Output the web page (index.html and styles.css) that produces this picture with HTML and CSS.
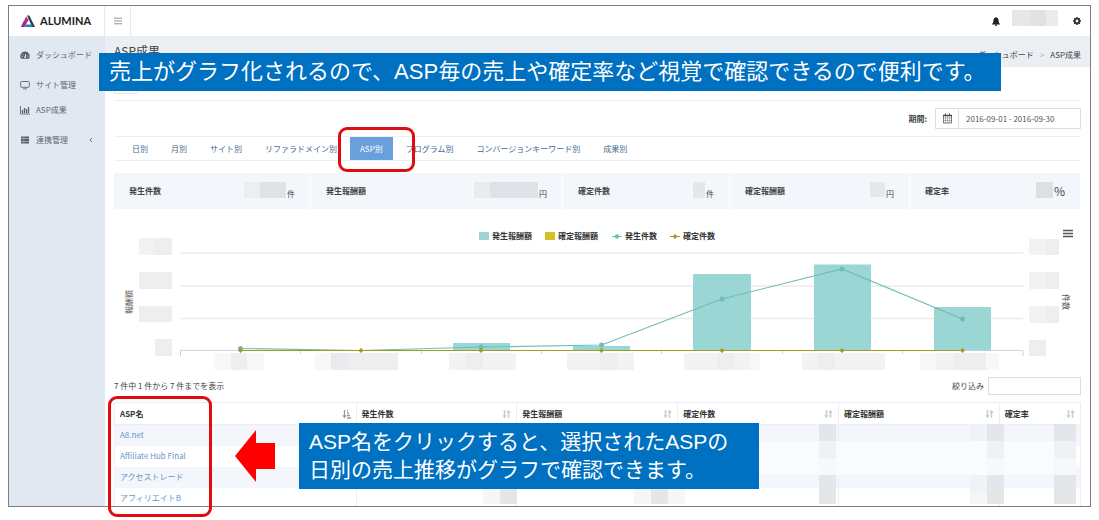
FILE: index.html
```html
<!DOCTYPE html>
<html lang="ja">
<head>
<meta charset="utf-8">
<title>ALUMINA - ASP成果</title>
<link rel="stylesheet" href="styles.css">
</head>
<body>
<svg class="defs" aria-hidden="true">
  <symbol id="sort" viewBox="0 0 9 10">
    <path d="M2.500 1v6M6.500 9V3" stroke="currentColor" stroke-width="1.500"/>
    <path d="M0.300 6.300h4.400L2.500 9.300zM4.300 3.700h4.400L6.500 .7z" fill="currentColor"/>
  </symbol>
</svg>
<div class="window">
  <header class="topbar">
    <a class="brand" href="#">
      <svg width="14" height="13" viewBox="0 0 14 13" aria-hidden="true">
        <path d="M5.200 1.500 7.600 5 3.500 12H0z" fill="#c2268b"/>
        <path d="M2.800 6 5 8.600 3.500 12H0z" fill="#7b3c98"/>
        <path d="M6 .5h2.300L14 12h-2.800z" fill="#2d3e50"/>
        <path d="M5.400 9.600h5.200l1 2.400H3.800z" fill="#2b7fa8"/>
      </svg>
      <span>ALUMINA</span>
    </a>
    <button class="toggle" type="button" aria-label="メニュー">
      <svg width="8" height="8" viewBox="0 0 8 8"><path d="M0 1.200h8M0 4h8M0 6.800h8" stroke="#8b98a6"/></svg>
    </button>
    <div class="tools">
      <button type="button" aria-label="通知">
        <svg width="8" height="9" viewBox="0 0 8 9"><path d="M4 0c.5 0 .7.3.7.7C6 1 6.600 2 6.600 3.300c0 2 .4 2.800 1.400 3.700v.5H0V7c1-.9 1.400-1.700 1.400-3.700C1.400 2 2 1 3.300.7 3.300.3 3.500 0 4 0zM2.900 7.800h2.200C5 8.600 4.600 9 4 9s-1-.4-1.100-1.200z" fill="#222"/></svg>
      </button>
      <svg class="user" width="46" height="16" aria-hidden="true"><path d="M0 0h18v16H0z" fill="#e7e7e7"/><path d="M18 0h16v16H18z" fill="#e1e1e1"/><path d="M34 0h12v16H34z" fill="#ebebeb"/></svg>
      <button type="button" aria-label="設定">
        <svg width="8" height="8" viewBox="0 0 8 8"><circle cx="4" cy="4" r="2.200" fill="none" stroke="#222" stroke-width="1.600"/><path d="M4 0v1.500M4 6.500V8M0 4h1.500M6.500 4H8M1.200 1.200l1 1M5.800 5.800l1 1M6.800 1.200l-1 1M2.200 5.800l-1 1" stroke="#222" stroke-width="1.500"/></svg>
      </button>
    </div>
  </header>

  <div class="body">
    <nav class="sidebar">
      <ul>
        <li><a href="#">
          <svg width="10" height="10" viewBox="0 0 10 10"><path d="M5 1.500a4.700 4.700 0 0 0-4 7.200h8A4.700 4.700 0 0 0 5 1.500z" fill="#555f6b"/><path d="M5 7.500 5.800 4" stroke="#e2e8f1"/><g fill="#e2e8f1"><circle cx="2.200" cy="6.200" r=".6"/><circle cx="3" cy="4" r=".6"/><circle cx="7.900" cy="6.200" r=".6"/><circle cx="5" cy="7.300" r=".9"/></g></svg>
          ダッシュボード</a></li>
      </ul>
      <ul>
        <li><a href="#">
          <svg width="10" height="10" viewBox="0 0 10 10"><rect x=".7" y="1.500" width="8.600" height="5.800" rx=".8" fill="none" stroke="#66707c"/><path d="M3 8.900h4" stroke="#66707c"/></svg>
          サイト管理</a></li>
        <li><a href="#">
          <svg width="10" height="10" viewBox="0 0 10 10"><path d="M.5 1v8H10" fill="none" stroke="#66707c"/><path d="M2.500 8V5M4.500 8V3M6.500 8V4M8.500 8V2" stroke="#555f6b" stroke-width="1.300"/></svg>
          ASP成果</a></li>
      </ul>
      <ul>
        <li><a href="#">
          <svg width="10" height="10" viewBox="0 0 10 10"><path d="M1 2.500h8M1 5h8M1 7.500h8" stroke="#555f6b" stroke-width="1.900"/><path d="M3.800 1v8" stroke="#a9b2bd" stroke-width=".6"/></svg>
          連携管理
          <svg class="chevron" width="4" height="6" viewBox="0 0 4 6"><path d="M3 1 1 3l2 2" fill="none" stroke="#66707c" stroke-width=".9"/></svg></a></li>
      </ul>
    </nav>

    <main>
      <div class="page-head">
        <h1>ASP成果</h1>
        <div class="crumbs"><a href="#">ダッシュボード</a><i>&gt;</i><span>ASP成果</span></div>
      </div>
      <div class="content">
        <div class="strip"><span></span></div>
        <div class="period">
          <label for="range">期間:</label>
          <div class="range">
            <svg width="22" height="18" viewBox="0 0 22 18" aria-hidden="true"><path d="M7.500 5.500h8v7.500h-8z" fill="#fff" stroke="#555" stroke-width=".8"/><path d="M7 5.500h9" stroke="#444" stroke-width="1.400"/><path d="M9.500 3.500v2M13.500 3.500v2" stroke="#444"/><path d="M7.500 8h8M7.500 10.500h8M9.500 6v7M11.500 6v7M13.500 6v7" stroke="#777" stroke-width=".5"/></svg>
            <input id="range" type="text" value="2016-09-01 - 2016-09-30">
          </div>
        </div>
        <nav class="tabs">
          <a href="#">日別</a><a href="#">月別</a><a href="#">サイト別</a><a href="#">リファラドメイン別</a><a class="active" href="#">ASP別</a><a href="#">プログラム別</a><a href="#">コンバージョンキーワード別</a><a href="#">成果別</a>
        </nav>
        <div class="summary">
          <div><b>発生件数</b><span><svg width="42" height="16"><path d="M0 0h16v16H0z" fill="#eceef2"/><path d="M16 0h26v16H16z" fill="#dfe1e6"/></svg>件</span></div>
          <div><b>発生報酬額</b><span><svg width="64" height="16"><path d="M0 0h16v16H0z" fill="#e9ebef"/><path d="M16 0h48v16H16z" fill="#dfe1e6"/></svg>円</span></div>
          <div><b>確定件数</b><span><svg width="12" height="16"><path d="M0 0h12v16H0z" fill="#e4e6ea"/></svg>件</span></div>
          <div><b>確定報酬額</b><span><svg width="15" height="16"><path d="M0 0h15v15H0z" fill="#e6e7eb"/></svg>円</span></div>
          <div><b>確定率</b><span class="rate"><svg width="17" height="16"><path d="M0 0h17v16H0z" fill="#dddfe3"/></svg>%</span></div>
        </div>

        <div class="chart">
          <button type="button" aria-label="グラフメニュー"><svg width="10" height="9" viewBox="0 0 10 9"><path d="M0 1.500h10M0 4.500h10M0 7.500h10" stroke="#555" stroke-width="1.700"/></svg></button>
          <svg class="plot" viewBox="114 209 967 166" role="img" aria-label="ASP別の売上">
            <g class="legend">
              <path d="M479 232h10v8h-10z" fill="#9ad6d4"/><text x="492" y="239">発生報酬額</text>
              <path d="M545 232h10v8h-10z" fill="#d3c322"/><text x="558" y="239">確定報酬額</text>
              <path d="M612 236.500h10" stroke="#6fbdb8"/><circle cx="617" cy="236.500" r="2.200" fill="#6fbdb8"/><text x="625" y="239">発生件数</text>
              <path d="M670 236.500h10" stroke="#a39a22"/><path d="m675 234 2.500 2.500-2.500 2.500-2.500-2.500z" fill="#a39a22"/><text x="683" y="239">確定件数</text>
            </g>
            <path d="M180 253h843M180 286h843M180 318.500h843" stroke="#ebebeb" stroke-width="1.500"/>
            <path d="M180.500 356v-5.500h842.500v5.500M300.500 350v4M421.500 350v4M541.500 350v4M661.500 350v4M782.500 350v4M902.500 350v4" fill="none" stroke="#ccd6dc"/>
            <g fill="#eeeeee">
              <path d="M139 238h33v17h-33zM139 272h33v17h-33zM139 306h33v16h-33zM155 339h17v17h-17z"/>
              <path d="M1029 239h30v16h-30zM1029 272h30v17h-30zM1029 306h30v17h-30zM1029 340h17v16h-17z"/>
            </g>
            <path d="M139 238h16v17h-16zM1029 239h17v16h-17zM1029 272h17v17h-17zM1029 306h17v17h-17z" fill="#f2f2f2"/>
            <path d="M214 353h50v17h-50zM315 353h16v17h-16zM986 353h13v17h-13zM920 353h16v17h-16zM751 353h9v17h-9z" fill="#f8f8f8"/>
            <path d="M449 353h67v17h-67zM567 353h67v17h-67zM684 353h67v17h-67zM802 353h83v17h-83zM936 353h17v17h-17z" fill="#f3f3f4"/>
            <path d="M231 353h16v17h-16zM348 353h50v17h-50zM953 353h33v17h-33zM466 353h17v17h-17zM600 353h17v17h-17zM717 353h17v17h-17zM818 353h17v17h-17z" fill="#eeeeef"/>
            <path d="M331 353h17v17h-17z" fill="#e9eaee"/>
            <path d="M453 343h57v7.500h-57zM573 346h57v4.500h-57zM693 274h58v76.500h-58zM814 264.500h57v86h-57zM934 307h57v43.500h-57z" fill="#9ad6d4"/>
            <path d="M240.500 348.500 361 350.500 481 347 601.500 345 722 299 842 269 962.500 319" fill="none" stroke="#6fbdb8" stroke-width="1.200"/>
            <g fill="#6fbdb8"><circle cx="240.500" cy="348.500" r="2.500"/><circle cx="481" cy="347" r="2.500"/><circle cx="601.500" cy="345" r="2.500"/><circle cx="722" cy="299" r="2.500"/><circle cx="842" cy="269" r="2.500"/><circle cx="962.500" cy="319" r="2.500"/></g>
            <path d="M240.500 350.500h722" stroke="#a39a22"/>
            <path d="m240.500 348 2.500 2.500-2.500 2.500-2.500-2.500zm120.500 0 2.500 2.500-2.500 2.500-2.500-2.500zm120 0 2.500 2.500-2.500 2.500-2.500-2.500zm120.500 0 2.500 2.500-2.500 2.500-2.500-2.500zm120.500 0 2.500 2.500-2.500 2.500-2.500-2.500zm120 0 2.500 2.500-2.500 2.500-2.500-2.500zm120.500 0 2.500 2.500-2.500 2.500-2.500-2.500z" fill="#a39a22"/>
            <text class="axis" transform="translate(132 302) rotate(-90)">報酬額</text>
            <text class="axis" transform="translate(1063 302) rotate(90)">件数</text>
          </svg>
        </div>

        <div class="list-head">
          <span>7 件中 1 件から 7 件までを表示</span>
          <label>絞り込み <input type="text"></label>
        </div>
        <div class="table-wrap">
          <table>
            <thead><tr>
              <th class="name"><button type="button">ASP名<svg class="on" width="9" height="10" viewBox="0 0 9 10"><path d="M2.500 1v6M5 1.500h1M5 4h2M5 6.500h3M5 9h4" stroke="currentColor" stroke-width="1.300"/><path d="M.3 6.300h4.400L2.500 9.300z" fill="currentColor"/></svg></button></th>
              <th><button type="button">発生件数<svg width="9" height="10"><use href="#sort"/></svg></button></th>
              <th><button type="button">発生報酬額<svg width="9" height="10"><use href="#sort"/></svg></button></th>
              <th><button type="button">確定件数<svg width="9" height="10"><use href="#sort"/></svg></button></th>
              <th><button type="button">確定報酬額<svg width="9" height="10"><use href="#sort"/></svg></button></th>
              <th class="ratio"><button type="button">確定率<svg width="9" height="10"><use href="#sort"/></svg></button></th>
            </tr></thead>
            <tbody>
              <tr><td><a href="#">A8.net</a></td><td></td><td></td><td></td><td></td><td></td></tr>
              <tr><td><a href="#">Affiliate Hub Final</a></td><td></td><td></td><td></td><td></td><td></td></tr>
              <tr><td><a href="#">アクセストレード</a></td><td></td><td></td><td></td><td></td><td></td></tr>
              <tr><td><a href="#">アフィリエイトB</a></td><td></td><td></td><td></td><td></td><td></td></tr>
            </tbody>
          </table>
          <svg class="masked" viewBox="114 424 967 80" aria-hidden="true">
            <path d="M759 441h317v34H759z" fill="#fafbfe"/>
            <path d="M483 489h17v15h-17zM634 489h17v15h-17zM668 489h17v15h-17zM970 492h17v12h-17z" fill="#f6f6f6"/>
            <path d="M500 489h17v15h-17zM651 489h17v15h-17z" fill="#e6e6e7"/>
            <path d="M819 424h17v17h-17zM987 424h17v17h-17zM1054 424h22v17h-22zM819 475h17v17h-17zM987 475h17v17h-17zM1054 475h22v17h-22z" fill="#e3e6eb"/>
            <path d="M970 424h17v17h-17zM970 475h17v17h-17z" fill="#eff2f6"/>
            <path d="M819 441h17v17h-17zM987 441h17v17h-17zM1054 441h22v17h-22z" fill="#f0f1f4"/>
            <path d="M819 458h17v17h-17zM987 458h17v17h-17zM1054 458h22v17h-22z" fill="#f7f8fa"/>
            <path d="M819 492h17v12h-17zM987 492h17v12h-17zM1054 492h22v12h-22z" fill="#e6e6e7"/>
          </svg>
        </div>
      </div>
    </main>
  </div>
</div>

<p class="note note-top">売上がグラフ化されるので、ASP毎の売上や確定率など視覚で確認できるので便利です。</p>
<p class="note note-table">ASP名をクリックすると、選択されたASPの<br>日別の売上推移がグラフで確認できます。</p>
<div class="mark mark-tab"></div>
<div class="mark mark-names"></div>
<svg class="arrow" width="40" height="52" viewBox="0 0 40 52" aria-hidden="true"><path d="M0 26 21 0v13h19v26H21v13z" fill="#f00"/></svg>
</body>
</html>
```
FILE: styles.css
```css
* { box-sizing: border-box; }
body {
  margin: 0;
  padding: 5px 8px 13px;
  height: 100vh;
  display: flex;
  position: relative;
  background: #fff;
  color: #444;
  font: 8px/12px "Noto Sans CJK JP", sans-serif;
  overflow: hidden;
}
a { color: inherit; text-decoration: none; }
ul { list-style: none; margin: 0; padding: 0; }
button { font: inherit; color: inherit; background: none; border: 0; padding: 0; }
svg { display: block; flex: none; }
.defs { position: absolute; width: 0; height: 0; }

.window {
  flex: 1;
  min-width: 0;
  display: flex;
  flex-direction: column;
  border: 1px solid #7f7f7f;
  overflow: hidden;
}
.topbar { display: flex; flex: none; height: 30px; }
.brand {
  width: 96px;
  padding-left: 12px;
  display: flex;
  align-items: center;
  gap: 5px;
  border-right: 1px solid #e7eaee;
  color: #222;
  font: 700 11px/14px Lato, sans-serif;
}
.toggle {
  width: 26px;
  display: flex;
  align-items: center;
  justify-content: center;
  border-right: 1px solid #e7eaee;
}
.tools {
  margin-left: auto;
  padding-right: 9px;
  display: flex;
  align-items: center;
  gap: 12px;
}
.tools .user { margin: 0 3px 6px 0; }

.body { flex: 1; display: flex; min-height: 0; }
.sidebar {
  flex: none;
  width: 96px;
  padding: 6px 0 0 11px;
  display: flex;
  flex-direction: column;
  gap: 5px;
  background: #e2e8f1;
  color: #5d6670;
  white-space: nowrap;
}
.sidebar a { display: flex; align-items: center; gap: 6px; height: 25px; }
.chevron { margin-left: 15px; }

main { flex: 1; min-width: 0; }
.page-head {
  height: 31px;
  padding: 0 9px;
  display: flex;
  justify-content: space-between;
  background: #ebeff4;
}
h1 { margin: 0; font-size: 12px; line-height: 30px; font-weight: 400; }
.crumbs { display: flex; gap: 6px; line-height: 38px; }
.crumbs i { color: #aaa; font-style: normal; }

.content { padding: 0 9px; }
.strip { height: 34px; border-bottom: 1px solid #eee; }
.strip span {
  display: block;
  width: 24px;
  height: 27px;
  border: 1px solid #e5e8ec;
  border-top: 0;
}
.period {
  height: 36px;
  display: flex;
  align-items: center;
  justify-content: flex-end;
  gap: 8px;
  border-bottom: 1px solid #eee;
  font-weight: 700;
}
.range { display: flex; width: 146px; height: 21px; border: 1px solid #ddd; align-items: stretch; }
.range svg { align-self: center; }
.range input {
  flex: 1;
  min-width: 0;
  border: 0;
  border-left: 1px solid #ddd;
  padding: 0 7px;
  font: 8px/12px "Noto Sans CJK JP", sans-serif;
  color: #555;
}
.tabs {
  height: 24px;
  padding-left: 8px;
  display: flex;
  gap: 3px;
  border-bottom: 1px solid #eee;
  color: #44698f;
  line-height: 24px;
  white-space: nowrap;
}
.tabs a { padding: 0 10px; }
.tabs .active { background: #699fdb; color: #fff; }

.summary {
  margin-top: 12px;
  height: 36px;
  display: grid;
  grid-template-columns: 197fr 252fr 167fr 180fr 171fr;
  background: #f3f6fb;
}
.summary div {
  padding: 0 15px;
  display: flex;
  align-items: center;
  justify-content: space-between;
  border-right: 1px solid #fff;
}
.summary span { display: flex; align-items: flex-end; gap: 1px; }
.summary svg { margin-bottom: 2px; }
.summary .rate { align-items: center; font-size: 12px; }

.chart { position: relative; }
.chart button { position: absolute; right: 8px; top: 20px; }
.plot { width: 100%; }
.legend text { font-size: 8px; font-weight: 700; fill: #333; }
.axis { font-size: 8px; text-anchor: middle; fill: #555; }

.list-head {
  height: 22px;
  display: flex;
  align-items: center;
  justify-content: space-between;
}
.list-head label { display: flex; align-items: center; gap: 4px; }
.list-head input { width: 93px; height: 18px; border: 1px solid #ddd; }

.table-wrap { position: relative; margin-top: 5px; }
table { width: 100%; table-layout: fixed; border-collapse: collapse; }
th, td { padding: 0 5px; border: 1px solid #eceef1; text-align: left; }
th { height: 22px; }
td { height: 21px; border-top: 0; border-bottom: 0; color: #6a95c6; }
tbody tr:nth-child(odd) { background: #f3f6fb; }
.name { width: 25%; }
.ratio { width: 8.4%; }
th button {
  width: 100%;
  display: flex;
  align-items: center;
  justify-content: space-between;
  font-weight: 700;
  color: #333;
}
th svg { color: #ccc; }
th .on { color: #999; }
.masked { position: absolute; left: 0; top: 22px; width: 100%; }

.note {
  position: absolute;
  margin: 0;
  background: #0070c0;
  color: #fff;
  font-family: "Liberation Sans", "Noto Sans CJK JP", sans-serif;
  white-space: nowrap;
}
.note-top { left: 99px; top: 53px; width: 902px; padding-left: 10px; font-size: 22px; line-height: 38px; }
.note-table { left: 299px; top: 423px; width: 460px; padding: 5px 10px; font-size: 21px; line-height: 28px; }
.mark { position: absolute; border: 3px solid #e00d10; border-radius: 9px; }
.mark-tab { left: 338px; top: 127px; width: 77px; height: 45px; }
.mark-names { left: 108px; top: 396px; width: 104px; height: 121px; }
.arrow { position: absolute; left: 235px; top: 430px; }
```
